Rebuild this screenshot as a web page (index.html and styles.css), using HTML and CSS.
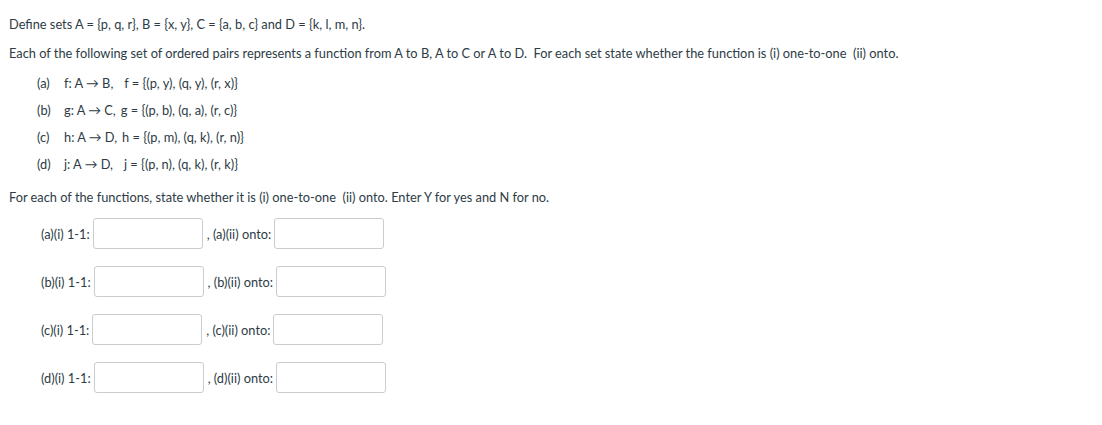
FILE: index.html
```html
<!DOCTYPE html>
<html>
<head>
<meta charset="utf-8">
<link rel="stylesheet" href="styles.css">
</head>
<body>
<div class="q">
  <p class="intro">Define sets A = {p, q, r}, B = {x, y}, C = {a, b, c} and D = {k, l, m, n}.</p>
  <p class="intro2">Each of the following set of ordered pairs represents a function from A to B, A to C or A to D.&nbsp; For each set state whether the function is (i) one-to-one&nbsp; (ii) onto.</p>
  <ul class="funcs">
    <li><span class="lbl">(a)</span><span class="map">f: A → B,</span><span class="set1">f = {(p, y), (q, y), (r, x)}</span></li>
    <li><span class="lbl">(b)</span><span class="map">g: A → C,</span><span>g = {(p, b), (q, a), (r, c)}</span></li>
    <li><span class="lbl">(c)</span><span class="map">h: A → D,</span><span>h = {(p, m), (q, k), (r, n)}</span></li>
    <li><span class="lbl">(d)</span><span class="map">j: A → D,</span><span class="set1">j = {(p, n), (q, k), (r, k)}</span></li>
  </ul>
  <p class="instr">For each of the functions, state whether it is (i) one-to-one&nbsp; (ii) onto. Enter Y for yes and N for no.</p>
  <div class="answers">
    <div class="row"><span>(a)(i) 1-1:</span><input class="box" type="text"><span>, (a)(ii) onto:</span><input class="box" type="text"></div>
    <div class="row"><span>(b)(i) 1-1:</span><input class="box" type="text"><span>, (b)(ii) onto:</span><input class="box" type="text"></div>
    <div class="row"><span>(c)(i) 1-1:</span><input class="box" type="text"><span>, (c)(ii) onto:</span><input class="box" type="text"></div>
    <div class="row"><span>(d)(i) 1-1:</span><input class="box" type="text"><span>, (d)(ii) onto:</span><input class="box" type="text"></div>
  </div>
</div>
</body>
</html>
```
FILE: styles.css
```css
html, body {
  margin: 0;
  padding: 0;
  background: #ffffff;
}
body {
  font-family: Lato, "Open Sans", sans-serif;
  font-size: 12.8px;
  color: #2d3b45;
}
.q {
  padding: 16px 9px 0 9px;
}
p {
  margin: 0;
  line-height: 17px;
}
.intro2 {
  margin-top: 12px;
}
.funcs {
  list-style: none;
  margin: 13px 0 0 0;
  padding: 0 0 0 28px;
}
.funcs li {
  line-height: 17px;
  margin-bottom: 10px;
  display: flex;
}
.lbl {
  width: 27px;
}
.map {
  margin-right: 5px;
}
.set1 {
  margin-left: 6px;
}
.instr {
  margin-top: 16px;
}
.answers {
  padding-left: 32px;
  margin-top: 12px;
  display: flex;
  flex-direction: column;
  gap: 17px;
}
.row {
  display: flex;
  align-items: center;
}
.box {
  width: 110px;
  height: 31px;
  box-sizing: border-box;
  border: 1px solid #c7cdd1;
  border-radius: 3px;
  margin: 0 4px 0 3px;
  padding: 0;
  background: #fff;
}
```
